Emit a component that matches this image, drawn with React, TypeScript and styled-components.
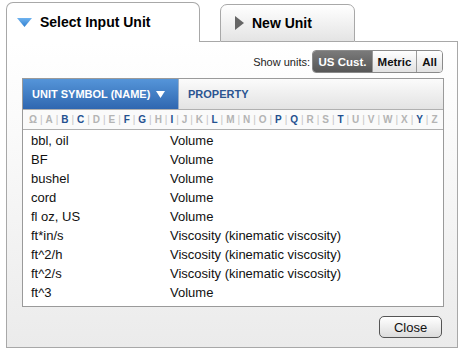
import styled, { createGlobalStyle } from 'styled-components';

const GlobalStyle = createGlobalStyle`
    body {
        margin: 0;
        background: #ffffff;
        font-family: "Liberation Sans", Arial, Helvetica, sans-serif;
        color: #000;
    }
`;

const Page = styled.div`
    padding: 2px 0 0 6px;
    width: 452px;
`;

const TabBar = styled.div`
    display: flex;
    align-items: flex-end;
    height: 40px;
`;

const Tab = styled.div<{ $active?: boolean }>`
    box-sizing: border-box;
    display: flex;
    align-items: center;
    gap: 8px;
    height: ${(p) => (p.$active ? '40px' : '38px')};
    width: ${(p) => (p.$active ? '194px' : '135px')};
    padding: ${(p) => (p.$active ? '0 0 1px 10px' : '0 0 1px 14px')};
    border: 1px solid #a8a8a8;
    border-bottom: ${(p) => (p.$active ? 'none' : '1px solid #a8a8a8')};
    border-radius: 7px 7px 0 0;
    background: ${(p) =>
        p.$active ? '#ffffff' : 'linear-gradient(#ffffff, #e4e4e4)'};
    font-size: 14px;
    font-weight: bold;
`;

const TabGap = styled.div<{ $grow?: boolean }>`
    height: 0;
    border-bottom: 1px solid #a8a8a8;
    width: ${(p) => (p.$grow ? 'auto' : '20px')};
    flex: ${(p) => (p.$grow ? '1' : 'none')};
`;

const Panel = styled.div`
    box-sizing: border-box;
    height: 306px;
    border: 1px solid #a8a8a8;
    border-top: none;
    background: linear-gradient(#ffffff 0%, #fafafa 30%, #ebebeb 100%);
    padding: 8px 14px 0 15px;
    display: flex;
    flex-direction: column;
`;

const UnitsRow = styled.div`
    display: flex;
    justify-content: flex-end;
    align-items: center;
    gap: 2px;
    font-size: 11px;
    color: #222;
`;

const Segmented = styled.div`
    display: flex;
    height: 21px;
    border: 1px solid #8a8a8a;
    border-radius: 4px;
    overflow: hidden;
`;

const Segment = styled.div<{ $on?: boolean; $w: number }>`
    display: flex;
    align-items: center;
    justify-content: center;
    box-sizing: border-box;
    width: ${(p) => p.$w}px;
    font-size: 11.5px;
    font-weight: bold;
    color: ${(p) => (p.$on ? '#fff' : '#111')};
    background: ${(p) =>
        p.$on ? 'linear-gradient(#7a7a7a, #575757)' : 'linear-gradient(#ffffff, #e2e2e2)'};
    & + & {
        border-left: 1px solid #9a9a9a;
    }
`;

const Table = styled.div`
    margin-top: 5px;
    width: 422px;
    box-sizing: border-box;
    border: 1px solid #9a9a9a;
    background: #fff;
`;

const HeaderRow = styled.div`
    display: flex;
    height: 30px;
    border-bottom: 1px solid #b0b0b0;
`;

const HeaderCell = styled.div<{ $sorted?: boolean }>`
    display: flex;
    align-items: center;
    gap: 6px;
    box-sizing: border-box;
    width: ${(p) => (p.$sorted ? '156px' : 'auto')};
    flex: ${(p) => (p.$sorted ? 'none' : '1')};
    padding-left: 9px;
    font-size: 11px;
    font-weight: bold;
    color: ${(p) => (p.$sorted ? '#fff' : '#2b5591')};
    background: ${(p) =>
        p.$sorted
            ? 'linear-gradient(#5595d9, #2f67b0)'
            : 'linear-gradient(#fbfbfb, #e3e3e3)'};
    border-right: ${(p) => (p.$sorted ? '1px solid #9bb0c8' : 'none')};
`;

const AlphaRow = styled.div`
    display: flex;
    justify-content: space-between;
    align-items: center;
    height: 19px;
    padding: 0 5px 0 6px;
    border-bottom: 1px solid #b0b0b0;
    background: #fafafa;
    font-size: 10px;
`;

const Letter = styled.span<{ $live?: boolean }>`
    font-weight: bold;
    color: ${(p) => (p.$live ? '#23508f' : '#b4b4b4')};
`;

const Sep = styled.span`
    color: #c4c4c4;
`;

const Rows = styled.div`
    padding: 1px 0 4px;
`;

const Row = styled.div`
    display: flex;
    height: 19px;
    align-items: center;
    font-size: 13px;
    color: #111;
`;

const SymbolCell = styled.div`
    width: 139px;
    padding-left: 8px;
`;

const Footer = styled.div`
    display: flex;
    justify-content: flex-end;
    margin-top: 9px;
    padding-right: 1px;
`;

const CloseButton = styled.button`
    width: 63px;
    height: 22px;
    border: 1px solid #555;
    border-radius: 5px;
    background: linear-gradient(#ffffff, #dcdcdc);
    font-family: inherit;
    font-size: 13px;
    color: #111;
    padding: 0;
`;

const letters = 'ΩABCDEFGHIJKLMNOPQRSTUVWXYZ'.split('');
const live = new Set(['B', 'C', 'F', 'G', 'I', 'L', 'P', 'Q', 'T', 'Y']);

const units: [string, string][] = [
    ['bbl, oil', 'Volume'],
    ['BF', 'Volume'],
    ['bushel', 'Volume'],
    ['cord', 'Volume'],
    ['fl oz, US', 'Volume'],
    ['ft*in/s', 'Viscosity (kinematic viscosity)'],
    ['ft^2/h', 'Viscosity (kinematic viscosity)'],
    ['ft^2/s', 'Viscosity (kinematic viscosity)'],
    ['ft^3', 'Volume'],
];

const App = () => {
    return (
        <Page>
            <GlobalStyle />
            <TabBar>
                <Tab $active>
                    <svg width="15" height="9" viewBox="0 0 15 9">
                        <defs>
                            <linearGradient id="tri" x1="0" y1="0" x2="0" y2="1">
                                <stop offset="0" stopColor="#6fb3ef" />
                                <stop offset="1" stopColor="#2f7fd0" />
                            </linearGradient>
                        </defs>
                        <path d="M0 0 H15 L7.5 9 Z" fill="url(#tri)" />
                    </svg>
                    Select Input Unit
                </Tab>
                <TabGap />
                <Tab>
                    <svg width="9" height="14" viewBox="0 0 9 14">
                        <path d="M0 0 L9 7 L0 14 Z" fill="#666" />
                    </svg>
                    New Unit
                </Tab>
                <TabGap $grow />
            </TabBar>
            <Panel>
                <UnitsRow>
                    Show units:
                    <Segmented>
                        <Segment $on $w={59}>US Cust.</Segment>
                        <Segment $w={44}>Metric</Segment>
                        <Segment $w={26}>All</Segment>
                    </Segmented>
                </UnitsRow>
                <Table>
                    <HeaderRow>
                        <HeaderCell $sorted>
                            UNIT SYMBOL (NAME)
                            <svg width="9" height="7" viewBox="0 0 9 7">
                                <path d="M0 0 H9 L4.5 7 Z" fill="#fff" />
                            </svg>
                        </HeaderCell>
                        <HeaderCell>PROPERTY</HeaderCell>
                    </HeaderRow>
                    <AlphaRow>
                        {letters.map((l, i) => (
                            <>
                                {i > 0 && <Sep key={'s' + l}>|</Sep>}
                                <Letter key={l} $live={live.has(l)}>
                                    {l}
                                </Letter>
                            </>
                        ))}
                    </AlphaRow>
                    <Rows>
                        {units.map(([sym, prop]) => (
                            <Row key={sym}>
                                <SymbolCell>{sym}</SymbolCell>
                                <div>{prop}</div>
                            </Row>
                        ))}
                    </Rows>
                </Table>
                <Footer>
                    <CloseButton>Close</CloseButton>
                </Footer>
            </Panel>
        </Page>
    );
};

export default App;
